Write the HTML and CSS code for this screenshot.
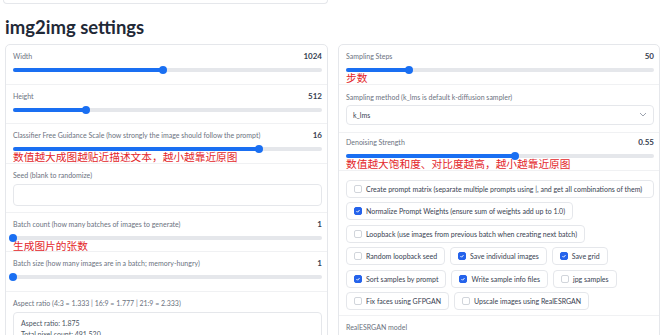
FILE: index.html
```html
<!DOCTYPE html>
<html lang="en">
<head>
    <meta charset="UTF-8">
    <title>img2img settings</title>
    <link rel="stylesheet" href="styles.css">
</head>
<body>
    <div class="prev-box"></div>
    <h2 class="page-title">img2img settings</h2>
    <div class="columns">
        <div class="panel">
            <div class="field">
                <div class="field-head"><span class="label">Width</span><span class="value">1024</span></div>
                <div class="slider"><div class="fill" style="width:48.4%"></div></div>
            </div>
            <div class="field">
                <div class="field-head"><span class="label">Height</span><span class="value">512</span></div>
                <div class="slider"><div class="fill" style="width:23.5%"></div></div>
            </div>
            <div class="field">
                <div class="field-head"><span class="label">Classifier Free Guidance Scale (how strongly the image should follow the prompt)</span><span class="value">16</span></div>
                <div class="slider">
                    <div class="note">数值越大成图越贴近描述文本，越小越靠近原图</div>
                    <div class="fill" style="width:79.7%"></div>
                </div>
            </div>
            <div class="field seed-field">
                <div class="field-head"><span class="label">Seed (blank to randomize)</span></div>
                <input class="text-input" type="text">
            </div>
            <div class="field">
                <div class="field-head"><span class="label">Batch count (how many batches of images to generate)</span><span class="value">1</span></div>
                <div class="slider">
                    <div class="note">生成图片的张数</div>
                    <div class="fill" style="width:0%"></div>
                </div>
            </div>
            <div class="field">
                <div class="field-head"><span class="label">Batch size (how many images are in a batch; memory-hungry)</span><span class="value">1</span></div>
                <div class="slider"><div class="fill" style="width:0%"></div></div>
            </div>
            <div class="field info-field">
                <div class="field-head"><span class="label">Aspect ratio (4:3 = 1.333 | 16:9 = 1.777 | 21:9 = 2.333)</span></div>
                <div class="info-box">
                    <div>Aspect ratio: 1.875</div>
                    <div>Total pixel count: 491,520</div>
                </div>
            </div>
        </div>

        <div class="panel">
            <div class="field">
                <div class="field-head"><span class="label">Sampling Steps</span><span class="value">50</span></div>
                <div class="slider">
                    <div class="note">步数</div>
                    <div class="fill" style="width:20.3%"></div>
                </div>
            </div>
            <div class="field select-field">
                <div class="field-head"><span class="label">Sampling method (k_lms is default k-diffusion sampler)</span></div>
                <div class="select">
                    <span>k_lms</span>
                    <svg width="8" height="5" viewBox="0 0 8 5"><path d="M1 1l3 3 3-3" fill="none" stroke="#9ca3af" stroke-width="1"/></svg>
                </div>
            </div>
            <div class="field denoise-field">
                <div class="field-head"><span class="label">Denoising Strength</span><span class="value">0.55</span></div>
                <div class="slider">
                    <div class="note">数值越大饱和度、对比度越高，越小越靠近原图</div>
                    <div class="fill" style="width:54.8%"></div>
                </div>
            </div>
            <div class="field check-field">
                <label class="check wide"><span class="box"></span>Create prompt matrix (separate multiple prompts using |, and get all combinations of them)</label>
                <label class="check"><span class="box on"><svg viewBox="0 0 8 8"><path d="M2 4.2l1.4 1.4L6 2.8"/></svg></span>Normalize Prompt Weights (ensure sum of weights add up to 1.0)</label>
                <label class="check"><span class="box"></span>Loopback (use images from previous batch when creating next batch)</label>
                <label class="check"><span class="box"></span>Random loopback seed</label>
                <label class="check"><span class="box on"><svg viewBox="0 0 8 8"><path d="M2 4.2l1.4 1.4L6 2.8"/></svg></span>Save individual images</label>
                <label class="check"><span class="box on"><svg viewBox="0 0 8 8"><path d="M2 4.2l1.4 1.4L6 2.8"/></svg></span>Save grid</label>
                <label class="check"><span class="box on"><svg viewBox="0 0 8 8"><path d="M2 4.2l1.4 1.4L6 2.8"/></svg></span>Sort samples by prompt</label>
                <label class="check"><span class="box on"><svg viewBox="0 0 8 8"><path d="M2 4.2l1.4 1.4L6 2.8"/></svg></span>Write sample info files</label>
                <label class="check"><span class="box"></span>jpg samples</label>
                <label class="check"><span class="box"></span>Fix faces using GFPGAN</label>
                <label class="check"><span class="box"></span>Upscale images using RealESRGAN</label>
            </div>
            <div class="field model-field">
                <div class="field-head"><span class="label">RealESRGAN model</span></div>
            </div>
        </div>
    </div>
</body>
</html>
```

FILE: styles.css
```css
body {
    margin: 0;
    padding: 0 10px 0 5px;
    font-family: Lato, "Noto Sans", sans-serif;
    color: #374151;
    background-color: #fff;
    overflow: hidden;
}
.prev-box {
    width: 323px;
    height: 3px;
    margin-left: -2px;
    border: 1px solid #e5e7eb;
    border-top: none;
    border-radius: 0 0 4px 4px;
}
.page-title {
    margin: 10px 0 4px;
    font-size: 18.5px;
    line-height: 26px;
    font-weight: 700;
    color: #1f2937;
}
.columns {
    display: grid;
    grid-template-columns: 323px 322px;
    gap: 10px;
    align-items: start;
}
.panel {
    border: 1px solid #e5e7eb;
    border-radius: 5px;
    background-color: #fff;
    overflow: hidden;
}
.field {
    position: relative;
    padding: 6px 5px 9.5px 7px;
    border-top: 1px solid #f0f1f3;
}
.field:first-child {
    border-top: none;
}
.field-head {
    display: flex;
    justify-content: space-between;
    align-items: center;
    height: 10px;
}
.label {
    font-size: 7px;
    color: #6b7280;
}
.value {
    font-size: 8px;
    font-weight: 700;
    color: #374151;
}
.slider {
    position: relative;
    height: 4px;
    margin: 7px 0 2px;
    background-color: #e5e7eb;
    border-radius: 2px;
}
.fill {
    position: relative;
    height: 100%;
    background-color: #1a6ff2;
    border-radius: 2px;
}
.fill::after {
    content: "";
    position: absolute;
    right: -4px;
    top: -2px;
    width: 8px;
    height: 8px;
    border-radius: 50%;
    background-color: #1a6ff2;
}
.note {
    position: absolute;
    left: 0;
    top: 4px;
    font-family: "Noto Sans CJK SC", sans-serif;
    font-size: 10.7px;
    line-height: 12px;
    color: #e3262a;
    white-space: nowrap;
}
.seed-field {
    padding-bottom: 6px;
}
.text-input {
    display: block;
    box-sizing: border-box;
    width: 100%;
    height: 22px;
    margin-top: 4px;
    border: 1px solid #e5e7eb;
    border-radius: 4px;
}
.info-box {
    margin-top: 4px;
    padding: 5px 7px;
    border: 1px solid #e5e7eb;
    border-radius: 4px;
    font-size: 7px;
    line-height: 11px;
    color: #4b5563;
}
.select-field {
    padding-top: 7px;
    padding-bottom: 7px;
}
.select {
    display: flex;
    justify-content: space-between;
    align-items: center;
    box-sizing: border-box;
    height: 20px;
    margin-top: 3px;
    padding: 0 6px;
    border: 1px solid #e5e7eb;
    border-radius: 4px;
    font-size: 7px;
    color: #374151;
}
.denoise-field {
    padding-top: 4px;
    padding-bottom: 10px;
}
.check-field {
    display: flex;
    flex-wrap: wrap;
    gap: 4.5px 5px;
    padding: 9px 5px 5px 7px;
}
.check {
    display: flex;
    align-items: center;
    gap: 4px;
    height: 18px;
    box-sizing: border-box;
    padding: 0 7px;
    border: 1px solid #e5e7eb;
    border-radius: 4px;
    font-size: 7px;
    color: #374151;
    white-space: nowrap;
}
.check.wide {
    flex: 1 0 100%;
}
.box {
    display: block;
    width: 8px;
    height: 8px;
    box-sizing: border-box;
    border: 1px solid #d1d5db;
    border-radius: 2px;
    background-color: #fff;
}
.box.on {
    border-color: #2563eb;
    background-color: #2563eb;
}
.box svg {
    display: block;
    width: 6px;
    height: 6px;
    fill: none;
    stroke: #fff;
    stroke-width: 1.3;
}
.model-field {
    padding-top: 6px;
}
```
